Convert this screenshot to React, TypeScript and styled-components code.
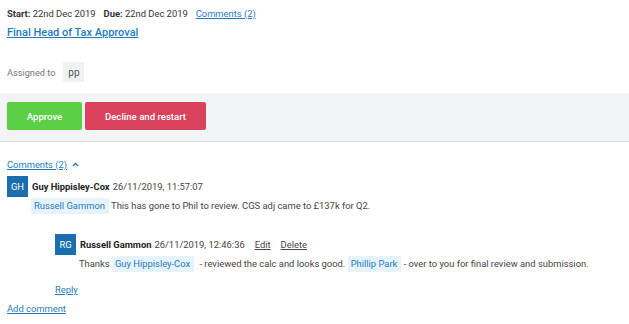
import React from "react";
import styled, { createGlobalStyle } from "styled-components";

const colors = {
  TEXT: "#333333",
  MUTED: "#777777",
  LINK: "#1f7bbf",
  AVATAR: "#1a6eae",
  MENTION_BG: "#e6f3fb",
  BAND: "#f3f4f6",
  BORDER: "#dedede",
  GREEN: "#5bcf45",
  RED: "#d9415c",
};

const GlobalStyle = createGlobalStyle`
  body {
    margin: 0;
    background: #ffffff;
    font-family: Roboto, "Liberation Sans", sans-serif;
    color: ${colors.TEXT};
  }
`;

const Page = styled.div`
  width: 629px;
  height: 324px;
  overflow: hidden;
  display: flex;
  flex-direction: column;
`;

const Header = styled.div`
  padding: 7px 7px 0 7px;
  display: flex;
  flex-direction: column;
`;

const MetaRow = styled.div`
  display: flex;
  align-items: baseline;
  gap: 8px;
  font-size: 9.4px;
  line-height: 13px;
`;

const Label = styled.b`
  font-weight: 700;
`;

const Link = styled.a<{ $size?: number; $weight?: number }>`
  color: ${colors.LINK};
  text-decoration: underline;
  font-size: ${({ $size }) => ($size ? `${$size}px` : "inherit")};
  font-weight: ${({ $weight }) => $weight || 400};
  cursor: pointer;
`;

const Title = styled(Link)`
  margin-top: 5px;
  line-height: 15px;
`;

const AssignedRow = styled.div`
  display: flex;
  align-items: center;
  gap: 8px;
  margin-top: 22px;
  font-size: 9.2px;
  color: ${colors.MUTED};
`;

const Badge = styled.span`
  display: inline-flex;
  align-items: center;
  justify-content: center;
  width: 21px;
  height: 20px;
  background: #f1f1f1;
  color: #555;
  font-size: 10px;
`;

const ActionBand = styled.div`
  margin-top: 11px;
  height: 49px;
  background: ${colors.BAND};
  border-bottom: 1px solid ${colors.BORDER};
  display: flex;
  align-items: flex-start;
  gap: 3px;
  padding: 9px 7px 0 7px;
  box-sizing: border-box;
`;

const Button = styled.button<{ $bg: string; $width: number }>`
  width: ${({ $width }) => $width}px;
  height: 28px;
  border: none;
  border-radius: 2px;
  background: ${({ $bg }) => $bg};
  color: #ffffff;
  font-family: inherit;
  font-size: 9.6px;
  font-weight: 500;
  padding: 0;
`;

const CommentsSection = styled.div`
  padding: 16px 7px 0 7px;
  display: flex;
  flex-direction: column;
`;

const ToggleRow = styled.div`
  display: flex;
  align-items: center;
  gap: 5px;
  font-size: 9.4px;
  line-height: 13px;
`;

const Comment = styled.div<{ $indent?: number }>`
  display: flex;
  flex-direction: column;
  margin-left: ${({ $indent }) => $indent || 0}px;
  margin-top: ${({ $indent }) => ($indent ? 20 : 5)}px;
`;

const CommentHead = styled.div`
  display: flex;
  align-items: center;
  gap: 3px;
  font-size: 9.4px;
`;

const Avatar = styled.div`
  width: 21px;
  height: 21px;
  margin-right: 1px;
  background: ${colors.AVATAR};
  color: #ffffff;
  font-size: 9.4px;
  display: flex;
  align-items: center;
  justify-content: center;
`;

const Author = styled.span`
  font-weight: 700;
  color: #222;
`;

const Time = styled.span`
  color: #444;
  margin-right: 7px;
`;

const SmallLink = styled.a`
  color: #444;
  text-decoration: underline;
  margin-right: 7px;
  cursor: pointer;
`;

const CommentBody = styled.div`
  margin: 1px 0 0 24px;
  font-size: 9.4px;
  line-height: 16px;
  color: #444;
`;

const Mention = styled.span<{ $trail?: number }>`
  display: inline-block;
  background: ${colors.MENTION_BG};
  color: ${colors.LINK};
  padding: 0 4px 0 3px;
  margin-right: ${({ $trail }) => $trail || 0}px;
`;

const Footer = styled.div<{ $indent?: number }>`
  margin-left: ${({ $indent }) => $indent || 0}px;
  margin-top: ${({ $indent }) => ($indent ? 11 : 6)}px;
  font-size: 9.4px;
  line-height: 13px;
`;

const Caret = () => (
  <svg width="7" height="5" viewBox="0 0 7 5">
    <path d="M1 4 L3.5 1.5 L6 4" fill="none" stroke={colors.LINK} strokeWidth="1.4" />
  </svg>
);

export default function App() {
  return (
    <Page>
      <GlobalStyle />
      <Header>
        <MetaRow>
          <span>
            <Label>Start:</Label> 22nd Dec 2019
          </span>
          <span>
            <Label>Due:</Label> 22nd Dec 2019
          </span>
          <Link>Comments (2)</Link>
        </MetaRow>
        <Title $size={11} $weight={500}>
          Final Head of Tax Approval
        </Title>
        <AssignedRow>
          Assigned to <Badge>pp</Badge>
        </AssignedRow>
      </Header>
      <ActionBand>
        <Button $bg={colors.GREEN} $width={75}>
          Approve
        </Button>
        <Button $bg={colors.RED} $width={121}>
          Decline and restart
        </Button>
      </ActionBand>
      <CommentsSection>
        <ToggleRow>
          <Link>Comments (2)</Link>
          <Caret />
        </ToggleRow>
        <Comment>
          <CommentHead>
            <Avatar>GH</Avatar>
            <Author>Guy Hippisley-Cox</Author>
            <Time>26/11/2019, 11:57:07</Time>
          </CommentHead>
          <CommentBody>
            <Mention>Russell Gammon</Mention> This has gone to Phil to review. CGS adj came to £137k for Q2.
          </CommentBody>
        </Comment>
        <Comment $indent={48}>
          <CommentHead>
            <Avatar>RG</Avatar>
            <Author>Russell Gammon</Author>
            <Time>26/11/2019, 12:46:36</Time>
            <SmallLink>Edit</SmallLink>
            <SmallLink>Delete</SmallLink>
          </CommentHead>
          <CommentBody>
            Thanks <Mention $trail={3}>Guy Hippisley-Cox</Mention> - reviewed the calc and looks good.{" "}
            <Mention>Phillip Park</Mention> - over to you for final review and submission.
          </CommentBody>
        </Comment>
        <Footer $indent={48}>
          <Link>Reply</Link>
        </Footer>
        <Footer>
          <Link>Add comment</Link>
        </Footer>
      </CommentsSection>
    </Page>
  );
}
